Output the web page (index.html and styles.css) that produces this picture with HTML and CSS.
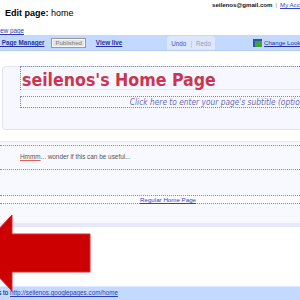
FILE: index.html
```html
<!DOCTYPE html>
<html lang="en">

<head>
    <meta charset="UTF-8">
    <meta name="viewport" content="width=device-width, initial-scale=1.0">
    <title>Edit page: home</title>
    <link rel="stylesheet" href="styles.css">
</head>

<body>
    <div class="page">
        <div class="account">
            <b>seilenos@gmail.com</b><span class="sep">|</span><a href="#">My Account</a>
        </div>
        <h1 class="heading"><b>Edit page:</b> home</h1>
        <div class="newpage"><a href="#">Create new page</a></div>

        <div class="toolbar">
            <a href="#" class="manager">&laquo; Page Manager</a>
            <span class="published">Published</span>
            <a href="#" class="live">View live</a>
            <div class="history">
                <a href="#" class="undo">Undo</a>
                <span class="sep">|</span>
                <span class="redo">Redo</span>
            </div>
            <div class="look">
                <svg width="9" height="8" viewBox="0 0 9 8">
                    <rect x="0" y="0" width="9" height="8" fill="#2a56b8"/>
                    <rect x="2" y="2" width="7" height="6" fill="#3fa33a"/>
                </svg>
                <a href="#">Change Look</a>
            </div>
        </div>

        <div class="header">
            <div class="title-box">
                <h2 class="title">seilenos's Home Page</h2>
            </div>
            <div class="subtitle-box">Click here to enter your page's subtitle (optional)</div>
        </div>

        <div class="main">
            <div class="note"><span class="typo">Hmmm</span>... wonder if this can be useful...</div>
            <div class="footer-links"><a href="#">Regular Home Page</a></div>
        </div>

        <div class="status">Publishes to <a href="#">http://seilenos.googlepages.com/home</a></div>
    </div>

    <svg class="arrow" width="95" height="85" viewBox="0 210 95 85">
        <polygon points="12,215 12,234 90,234 90,272 12,272 12,291 -24,253" fill="#cc0000" stroke="#d92a2a" stroke-width="1"/>
    </svg>
</body>

</html>
```

FILE: styles.css
```css
html,
body {
    margin: 0;
    height: 100%;
    overflow: hidden;
    background: #fff;
}

body {
    position: relative;
    font-family: "Liberation Sans", Arial, sans-serif;
    color: #000;
}

a {
    color: #2a3ab8;
}

.page {
    width: 320px;
    height: 300px;
    display: flex;
    flex-direction: column;
}

.account {
    height: 9px;
    line-height: 9px;
    font-size: 6.1px;
    padding-left: 212px;
    white-space: nowrap;
}

.account b {
    color: #111;
}

.account .sep {
    color: #8890aa;
    margin: 0 3px;
}

.account a {
    color: #3344cc;
}

.heading {
    margin: 0;
    padding-left: 5px;
    font-size: 9px;
    line-height: 9px;
    font-weight: normal;
    white-space: nowrap;
}

.newpage {
    margin-top: 9px;
    height: 8px;
    line-height: 8px;
    font-size: 6.3px;
    text-indent: -24px;
    white-space: nowrap;
}

.toolbar {
    height: 15px;
    background: #c3d9ff;
    border-bottom: 1px solid #b4cbf4;
    display: flex;
    align-items: center;
    font-size: 6.3px;
    white-space: nowrap;
}

.toolbar a {
    color: #1f31a8;
}

.manager {
    font-weight: bold;
    text-indent: -3.5px;
}

.published {
    margin-left: 7px;
    height: 8px;
    line-height: 8px;
    padding: 0 3px;
    font-size: 6px;
    color: #777;
    background: #e4e4e4;
    border: 1px solid #999;
    box-shadow: inset 0 0 0 1px #f6f6f6;
}

.live {
    margin-left: 10px;
    font-weight: bold;
}

.history {
    margin-left: 45px;
    align-self: flex-end;
    height: 14px;
    padding: 0 4px;
    display: flex;
    align-items: center;
    gap: 4px;
    background: #dce7fe;
    border-radius: 4px 4px 0 0;
}

.toolbar .undo {
    color: #3a55c0;
    text-decoration: none;
}

.history .sep {
    color: #a9b3d0;
}

.redo {
    color: #9a9caa;
}

.look {
    margin-left: 38px;
    display: flex;
    align-items: center;
    gap: 2px;
}

.look a {
    font-size: 6.1px;
}

.header {
    margin: 15px 0 0 2px;
    padding: 0 0 21px 17px;
    background: #f7f8ff;
    border: 1px solid #e1e4f7;
    border-right: none;
    border-radius: 4px 0 0 4px;
}

.title-box {
    margin-top: -1px;
    border-top: 1px dotted #7c7ce6;
    border-left: 1px dotted #7c7ce6;
}

.title {
    margin: 0;
    padding: 4px 0 0 1px;
    font-family: "DejaVu Sans Condensed", "DejaVu Sans", sans-serif;
    font-stretch: condensed;
    font-size: 17.6px;
    font-weight: bold;
    line-height: 18px;
    color: #cd3450;
    border-bottom: 1px solid #e3e5f8;
    white-space: nowrap;
}

.subtitle-box {
    margin-top: 6px;
    height: 10px;
    padding-right: 6px;
    border: 1px dotted #7c7ce6;
    border-right: none;
    font-family: "DejaVu Sans Condensed", "DejaVu Sans", sans-serif;
    font-stretch: condensed;
    font-style: italic;
    font-size: 8.3px;
    line-height: 10px;
    color: #6d6db5;
    text-align: right;
    white-space: nowrap;
}

.main {
    margin-top: 11px;
    padding-bottom: 19px;
    background: #f8f9ff;
    border-top: 1px solid #e2e5f7;
    border-bottom: 4px solid #e6e8fb;
}

.note {
    margin-top: 3px;
    height: 15px;
    padding: 7px 0 1px 20px;
    font-size: 6.4px;
    line-height: 8px;
    color: #555;
    border-top: 1px dotted #8383e8;
    border-bottom: 1px dotted #8383e8;
    white-space: nowrap;
}

.typo {
    text-decoration: underline;
    text-decoration-color: #e06060;
}

.footer-links {
    margin-top: 25px;
    height: 7px;
    padding-left: 140px;
    font-size: 6.2px;
    line-height: 7px;
    background: #fdfdff;
    border-top: 1px dotted #8383e8;
    border-bottom: 1px dotted #8383e8;
}

.footer-links a {
    color: #3a3ad0;
}

.status {
    margin-top: auto;
    height: 13px;
    line-height: 11px;
    font-size: 6.3px;
    text-indent: -26px;
    background: #c3d9ff;
    border-top: 1px solid #dde9ff;
    white-space: nowrap;
}

.arrow {
    position: absolute;
    left: 0;
    top: 210px;
}
```
